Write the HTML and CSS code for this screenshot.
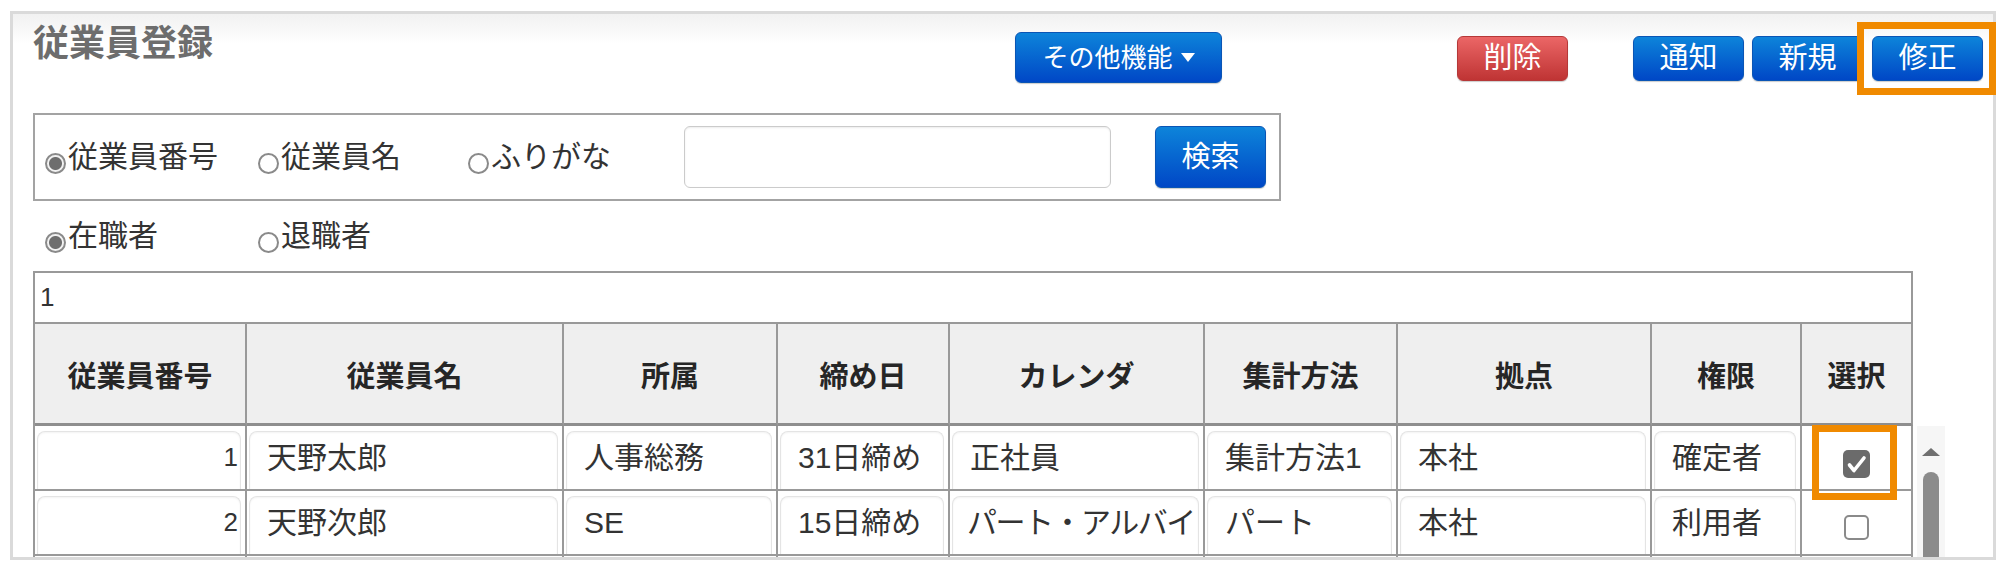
FILE: index.html
```html
<!DOCTYPE html>
<html lang="ja">
<head>
<meta charset="utf-8">
<title>従業員登録</title>
<link rel="stylesheet" href="styles.css">
</head>
<body>
<div class="panel">
  <div class="topbar">
    <h1 class="title">従業員登録</h1>
    <button class="btn btn-blue btn-menu">その他機能<span class="caret"></span></button>
    <button class="btn btn-red btn-small btn-del">削除</button>
    <button class="btn btn-blue btn-small btn-notify">通知</button>
    <button class="btn btn-blue btn-small btn-new">新規</button>
    <button class="btn btn-blue btn-small btn-edit">修正</button>
  </div>

  <div class="search">
    <label class="opt opt-1"><span class="radio checked"></span>従業員番号</label>
    <label class="opt opt-2"><span class="radio"></span>従業員名</label>
    <label class="opt opt-3"><span class="radio"></span>ふりがな</label>
    <input class="search-input" type="text">
    <button class="btn btn-blue btn-search">検索</button>
  </div>

  <div class="status">
    <label class="opt opt-1"><span class="radio checked"></span>在職者</label>
    <label class="opt opt-2"><span class="radio"></span>退職者</label>
  </div>

  <div class="list">
    <div class="grid grid-top">
      <div class="count">1</div>
      <div class="row head">
        <div class="cell">従業員番号</div>
        <div class="cell">従業員名</div>
        <div class="cell">所属</div>
        <div class="cell">締め日</div>
        <div class="cell">カレンダ</div>
        <div class="cell">集計方法</div>
        <div class="cell">拠点</div>
        <div class="cell">権限</div>
        <div class="cell">選択</div>
      </div>
    </div>
    <div class="body-wrap">
      <div class="grid grid-body">
        <div class="row">
          <div class="cell"><div class="box box-num">1</div></div>
          <div class="cell"><div class="box">天野太郎</div></div>
          <div class="cell"><div class="box">人事総務</div></div>
          <div class="cell"><div class="box">31日締め</div></div>
          <div class="cell"><div class="box">正社員</div></div>
          <div class="cell"><div class="box">集計方法1</div></div>
          <div class="cell"><div class="box">本社</div></div>
          <div class="cell"><div class="box">確定者</div></div>
          <div class="cell cell-check">
            <svg class="check" viewBox="0 0 27 28" width="27" height="28"><rect width="27" height="28" rx="5" fill="#6b6b6b"/><path d="M6.5 15 L11 20.5 L21 8" stroke="#fff" stroke-width="3.6" fill="none" stroke-linecap="round" stroke-linejoin="round"/></svg>
          </div>
        </div>
        <div class="row">
          <div class="cell"><div class="box box-num">2</div></div>
          <div class="cell"><div class="box">天野次郎</div></div>
          <div class="cell"><div class="box">SE</div></div>
          <div class="cell"><div class="box">15日締め</div></div>
          <div class="cell"><div class="box box-tight">パート・アルバイ</div></div>
          <div class="cell"><div class="box">パート</div></div>
          <div class="cell"><div class="box">本社</div></div>
          <div class="cell"><div class="box">利用者</div></div>
          <div class="cell cell-check"><span class="uncheck"></span></div>
        </div>
        <div class="row">
          <div class="cell"></div>
          <div class="cell"></div>
          <div class="cell"></div>
          <div class="cell"></div>
          <div class="cell"></div>
          <div class="cell"></div>
          <div class="cell"></div>
          <div class="cell"></div>
          <div class="cell"></div>
        </div>
      </div>
      <div class="vscroll"><span class="arrow-up"></span><span class="thumb"></span></div>
    </div>
  </div>
</div>

<div class="callout callout-edit"></div>
<div class="callout callout-check"></div>
</body>
</html>
```

FILE: styles.css
```css
html, body {
  margin: 0;
  padding: 0;
  background: #fff;
  overflow: hidden;
}

body {
  font-family: "Liberation Sans", "Noto Sans CJK JP", sans-serif;
  color: #333;
  position: relative;
  width: 1997px;
  height: 561px;
}

.panel {
  box-sizing: border-box;
  margin: 11px 0 0 10px;
  width: 1986px;
  height: 549px;
  border: 3px solid #dadada;
  padding: 0 10px 0 20px;
  overflow: hidden;
  background: linear-gradient(#f1f1f1, #ffffff 30px);
}

/* ---------- top bar ---------- */
.topbar {
  display: flex;
  align-items: flex-start;
  height: 99px;
}

.title {
  flex: none;
  width: 982px;
  margin: 12px 0 0 0;
  font-size: 36px;
  line-height: 1;
  font-weight: bold;
  color: #6d6d6d;
}

.btn {
  flex: none;
  box-sizing: border-box;
  display: flex;
  align-items: center;
  justify-content: center;
  padding: 0;
  font-family: inherit;
  font-size: 29px;
  line-height: 1;
  color: #fff;
  border: 1px solid;
  border-radius: 6px;
  box-shadow: 0 1px 1px rgba(0, 0, 0, 0.2);
}

.btn-blue {
  background: linear-gradient(#0d84da, #0047c6);
  border-color: #0a55b5;
}

.btn-red {
  background: linear-gradient(#eb6666, #bf3434);
  border-color: #b53838;
}

.btn-menu {
  width: 207px;
  height: 51px;
  margin-top: 18px;
  font-size: 26px;
}

.caret {
  margin-left: 8px;
  width: 0;
  height: 0;
  border-left: 7px solid transparent;
  border-right: 7px solid transparent;
  border-top: 9px solid #fff;
}

.btn-small {
  width: 111px;
  height: 45px;
  margin-top: 22px;
}

.btn-del { margin-left: 235px; }
.btn-notify { margin-left: 65px; }
.btn-new { margin-left: 8px; }
.btn-edit { margin-left: 9px; }

/* ---------- search ---------- */
.search {
  box-sizing: border-box;
  width: 1248px;
  height: 88px;
  border: 2px solid #a3a3a3;
  display: flex;
  align-items: center;
  padding-left: 10px;
}

.opt {
  flex: none;
  display: flex;
  align-items: center;
  font-size: 30px;
  line-height: 1.2;
  color: #333;
}

.opt-1 { width: 213px; }
.opt-2 { width: 210px; }
.opt-3 { width: 216px; }

.radio {
  flex: none;
  box-sizing: border-box;
  width: 21px;
  height: 21px;
  margin: 12px 2px 0 0;
  border: 2px solid #8a8a8a;
  border-radius: 50%;
  background: #fff;
}

.radio.checked {
  background: radial-gradient(circle, #6e6e6e 0, #6e6e6e 6px, #f2f2f2 7px);
}

.search-input {
  flex: none;
  box-sizing: border-box;
  width: 427px;
  height: 62px;
  margin: 0 44px 0 0;
  border: 1px solid #cbcbcb;
  border-radius: 6px;
  box-shadow: inset 0 1px 2px rgba(0, 0, 0, 0.08);
  background: #fff;
}

.btn-search {
  width: 111px;
  height: 62px;
}

.status {
  height: 70px;
  display: flex;
  align-items: center;
  padding-left: 12px;
}

/* ---------- list ---------- */
.grid {
  box-sizing: border-box;
  width: 1880px;
  border-left: 2px solid #999;
}

.grid-top {
  border-top: 2px solid #999;
}

.count {
  box-sizing: border-box;
  height: 51px;
  border-right: 2px solid #999;
  border-bottom: 2px solid #999;
  padding-left: 5px;
  display: flex;
  align-items: center;
  font-size: 26px;
  background: #fff;
}

.row {
  display: grid;
  grid-template-columns: 212px 317px 214px 172px 255px 193px 254px 150px 111px;
}

.cell {
  box-sizing: border-box;
  border-right: 2px solid #999;
  border-bottom: 2px solid #999;
  overflow: hidden;
  white-space: nowrap;
}

.head .cell {
  height: 102px;
  border-bottom: 3px solid #8e8e8e;
  background: #efefef;
  display: flex;
  align-items: center;
  justify-content: center;
  font-size: 29px;
  font-weight: bold;
  color: #262626;
}

.grid-body .cell {
  height: 65px;
  padding: 5px 4px 0 2px;
  background: #fff;
}

.box {
  box-sizing: border-box;
  height: 58px;
  display: flex;
  align-items: center;
  padding: 0 2px 6px 17px;
  border: 1px solid #e4e4e4;
  border-bottom: none;
  border-radius: 8px 8px 0 0;
  box-shadow: inset 0 1px 2px rgba(0, 0, 0, 0.05);
  font-size: 30px;
  line-height: 1.2;
  color: #333;
  overflow: hidden;
}

.box-num {
  justify-content: flex-end;
  font-size: 26px;
}

.box-tight {
  padding-left: 14px;
  letter-spacing: -1.5px;
}

.grid-body .cell-check {
  display: flex;
  justify-content: center;
  align-items: flex-start;
  padding: 0;
}

.check {
  display: block;
  margin-top: 24px;
}

.uncheck {
  display: block;
  box-sizing: border-box;
  width: 25px;
  height: 25px;
  margin-top: 24px;
  border: 2px solid #8a8a8a;
  border-radius: 5px;
  background: #fff;
}

.body-wrap {
  display: flex;
  align-items: flex-start;
}

.vscroll {
  flex: none;
  width: 28px;
  height: 150px;
  margin-left: 4px;
  background: #f6f6f6;
  display: flex;
  flex-direction: column;
  align-items: center;
}

.arrow-up {
  margin-top: 22px;
  width: 0;
  height: 0;
  border-left: 9px solid transparent;
  border-right: 9px solid transparent;
  border-bottom: 8px solid #707070;
}

.thumb {
  margin-top: 16px;
  width: 16px;
  height: 110px;
  border-radius: 8px 8px 0 0;
  background: #8b8b8b;
}

/* ---------- annotation frames ---------- */
.callout {
  position: absolute;
  box-sizing: border-box;
  border: 7px solid #f08a00;
}

.callout-edit {
  left: 1857px;
  top: 22px;
  width: 139px;
  height: 73px;
}

.callout-check {
  left: 1812px;
  top: 425px;
  width: 85px;
  height: 75px;
}
```
